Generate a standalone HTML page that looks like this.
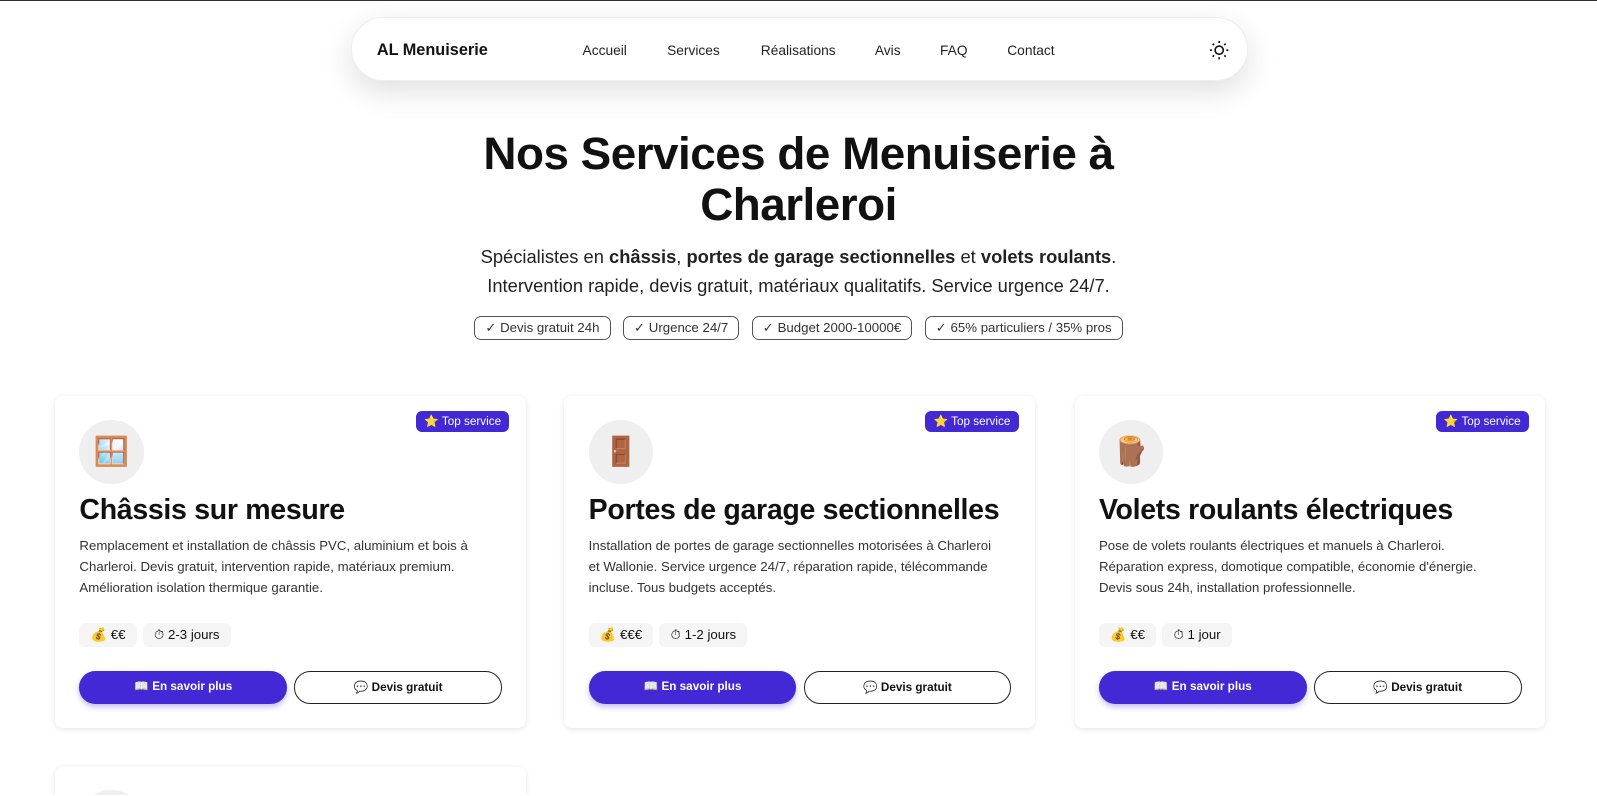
<!DOCTYPE html>
<html style="overflow:hidden;height:796px"><head><meta charset="utf-8"><style>
*{box-sizing:border-box;margin:0;padding:0}
html,body{width:1597px;height:796px;overflow:hidden}
body{background:#fff;font-family:"Liberation Sans",sans-serif;color:#111;border-top:1px solid #333;position:relative}
.wrap{position:absolute;left:0;top:0;width:1568px;height:780px;overflow:hidden;zoom:1.0185}
.nav{position:absolute;left:345px;top:16px;width:880px;height:63px;border-radius:32px;background:#fff;box-shadow:0 10px 30px rgba(0,0,0,.13);border:1px solid #eee}
.logo{position:absolute;left:24px;top:22px;font-weight:bold;font-size:16px}
.links a{position:absolute;top:24px;font-size:13.5px;color:#222;text-decoration:none}
h1{position:absolute;left:0;width:1568px;top:126px;text-align:center;font-size:45px;line-height:50px;font-weight:bold;letter-spacing:-.5px}
.sub{position:absolute;left:0;width:1568px;top:238px;text-align:center;font-size:18px;line-height:28px;color:#222}
.tags{position:absolute;left:0;width:1568px;top:309px;text-align:center;font-size:13px}
.tags span{display:inline-block;border:1px solid #555;border-radius:7px;padding:3px 10px;margin:0 6px;color:#333}
.card{position:absolute;top:388px;width:462px;height:326px;border-radius:8px;box-shadow:0 1px 6px rgba(0,0,0,.1);background:#fff}
.badge{position:absolute;right:16px;top:15px;background:#4328d6;color:#fff;font-size:11.5px;padding:3px 8px;border-radius:6px}
.ic{position:absolute;left:24px;top:23px;width:63px;height:63px;border-radius:50%;background:#efefef;text-align:center;line-height:63px;font-size:28px}
.card h2{position:absolute;left:24px;top:96px;font-size:28px;font-weight:bold;white-space:nowrap;letter-spacing:-.3px}
.card p{position:absolute;left:24px;top:136px;width:400px;font-size:13px;line-height:21px;color:#333}
.meta{position:absolute;left:24px;top:223px;font-size:13px}
.meta span{display:inline-block;background:#f5f5f5;border-radius:6px;padding:4px 11px;margin-right:6px}
.b1,.b2{position:absolute;top:270px;width:204px;height:32px;border-radius:16px;font-size:11.5px;font-weight:bold;text-align:center;line-height:31px}
.b1{left:24px;background:#4328d6;color:#fff;box-shadow:0 3px 6px rgba(67,40,214,.3)}
.b2{left:235px;border:1px solid #222;background:#fff}
</style></head><body><div class="wrap">
<div class="nav"><div class="logo">AL Menuiserie</div>
<div class="links"><a style="left:226px">Accueil</a><a style="left:309px">Services</a><a style="left:401px">Réalisations</a><a style="left:513px">Avis</a><a style="left:577px">FAQ</a><a style="left:643px">Contact</a></div>
<svg style="position:absolute;left:841px;top:21px" width="20" height="20" viewBox="0 0 20 20" fill="none" stroke="#111" stroke-width="1.6"><circle cx="10" cy="10" r="4"/><path d="M10 1v2M10 17v2M1 10h2M17 10h2M3.6 3.6l1.4 1.4M15 15l1.4 1.4M3.6 16.4L5 15M15 5l1.4-1.4"/></svg></div>
<h1>Nos Services de Menuiserie à<br>Charleroi</h1>
<div class="sub">Spécialistes en <b>châssis</b>, <b>portes de garage sectionnelles</b> et <b>volets roulants</b>.<br>Intervention rapide, devis gratuit, matériaux qualitatifs. Service urgence 24/7.</div>
<div class="tags"><span>✓ Devis gratuit 24h</span><span>✓ Urgence 24/7</span><span>✓ Budget 2000-10000€</span><span>✓ 65% particuliers / 35% pros</span></div>

<div class="card" style="left:54px"><div class="badge">⭐ Top service</div><div class="ic">🪟</div><h2>Châssis sur mesure</h2><p>Remplacement et installation de châssis PVC, aluminium et bois à Charleroi. Devis gratuit, intervention rapide, matériaux premium. Amélioration isolation thermique garantie.</p><div class="meta"><span>💰 €€</span><span>⏱ 2-3 jours</span></div><div class="b1">📖 En savoir plus</div><div class="b2">💬 Devis gratuit</div></div>
<div class="card" style="left:554px"><div class="badge">⭐ Top service</div><div class="ic">🚪</div><h2>Portes de garage sectionnelles</h2><p>Installation de portes de garage sectionnelles motorisées à Charleroi et Wallonie. Service urgence 24/7, réparation rapide, télécommande incluse. Tous budgets acceptés.</p><div class="meta"><span>💰 €€€</span><span>⏱ 1-2 jours</span></div><div class="b1">📖 En savoir plus</div><div class="b2">💬 Devis gratuit</div></div>
<div class="card" style="left:1055px"><div class="badge">⭐ Top service</div><div class="ic">🪵</div><h2>Volets roulants électriques</h2><p>Pose de volets roulants électriques et manuels à Charleroi. Réparation express, domotique compatible, économie d'énergie. Devis sous 24h, installation professionnelle.</p><div class="meta"><span>💰 €€</span><span>⏱ 1 jour</span></div><div class="b1">📖 En savoir plus</div><div class="b2">💬 Devis gratuit</div></div>
<div class="card" style="left:54px;top:752px;height:60px"><div class="ic"></div></div>
</div></body></html>
